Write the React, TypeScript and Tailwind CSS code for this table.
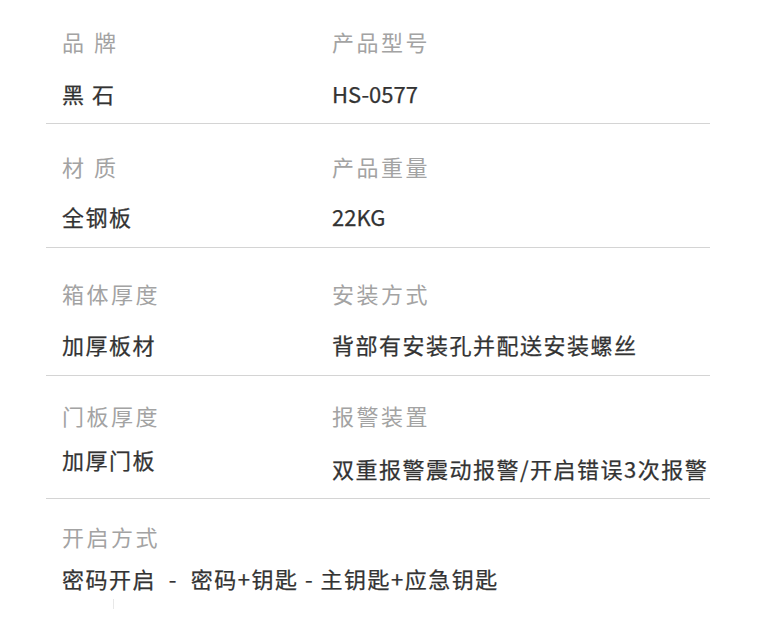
import React from 'react';

interface Spec {
    label: string;
    value: string;
    latin?: boolean;
}

interface RowProps {
    left: Spec;
    right?: Spec;
    className: string;
    gap: string;
    rightValueOffset?: string;
    last?: boolean;
}

const Label: React.FC<{ children: React.ReactNode }> = ({ children }) => (
    <div className="h-[30px] leading-[30px] text-[22px] tracking-[2.5px] text-[#a3a3a3] whitespace-pre">{children}</div>
);

const Value: React.FC<{ spec: Spec; className?: string }> = ({ spec, className = '' }) => (
    <div
        className={`h-[30px] leading-[30px] text-[22px] text-[#333333] [-webkit-text-stroke:0.25px_#333333] whitespace-pre ${spec.latin ? 'tracking-normal' : 'tracking-[1.5px]'} ${className}`}
    >
        {spec.value}
    </div>
);

const Row: React.FC<RowProps> = ({ left, right, className, gap, rightValueOffset = '', last }) => (
    <div className={`grid grid-cols-[270px_1fr] pl-4 ${last ? '' : 'border-b border-[#d4d4d4]'} ${className}`}>
        <div className={`flex flex-col ${gap}`}>
            <Label>{left.label}</Label>
            <Value spec={left} />
        </div>
        {right && (
            <div className={`flex flex-col ${gap}`}>
                <Label>{right.label}</Label>
                <Value spec={right} className={rightValueOffset} />
            </div>
        )}
    </div>
);

const App: React.FC = () => {
    return (
        <div
            className="w-[759px] h-[640px] bg-white overflow-hidden"
            style={{ fontFamily: '"Noto Sans CJK SC", "Noto Sans", sans-serif' }}
        >
            <div className="ml-[46px] w-[664px]">
                <Row
                    className="pt-[26px] pb-[15px]"
                    gap="gap-[22px]"
                    left={{ label: '品 牌', value: '黑 石' }}
                    right={{ label: '产品型号', value: 'HS-0577', latin: true }}
                />
                <Row
                    className="pt-[27px] pb-[16px]"
                    gap="gap-[20px]"
                    left={{ label: '材 质', value: '全钢板' }}
                    right={{ label: '产品重量', value: '22KG', latin: true }}
                />
                <Row
                    className="pt-[30px] pb-[16px]"
                    gap="gap-[21px]"
                    left={{ label: '箱体厚度', value: '加厚板材' }}
                    right={{ label: '安装方式', value: '背部有安装孔并配送安装螺丝' }}
                />
                <Row
                    className="pt-[24px] pb-[15px]"
                    gap="gap-[14px]"
                    rightValueOffset="mt-[9px]"
                    left={{ label: '门板厚度', value: '加厚门板' }}
                    right={{ label: '报警装置', value: '双重报警震动报警/开启错误3次报警' }}
                />
                <Row
                    className="pt-[22px]"
                    gap="gap-[12px]"
                    last
                    left={{ label: '开启方式', value: '密码开启  -  密码+钥匙 - 主钥匙+应急钥匙' }}
                />
                {/* faint leftover mark under the last row */}
                <div className="ml-[67px] mt-[6px] w-px h-[10px] bg-[#e8e8e8]" />
            </div>
        </div>
    );
};

export default App;
